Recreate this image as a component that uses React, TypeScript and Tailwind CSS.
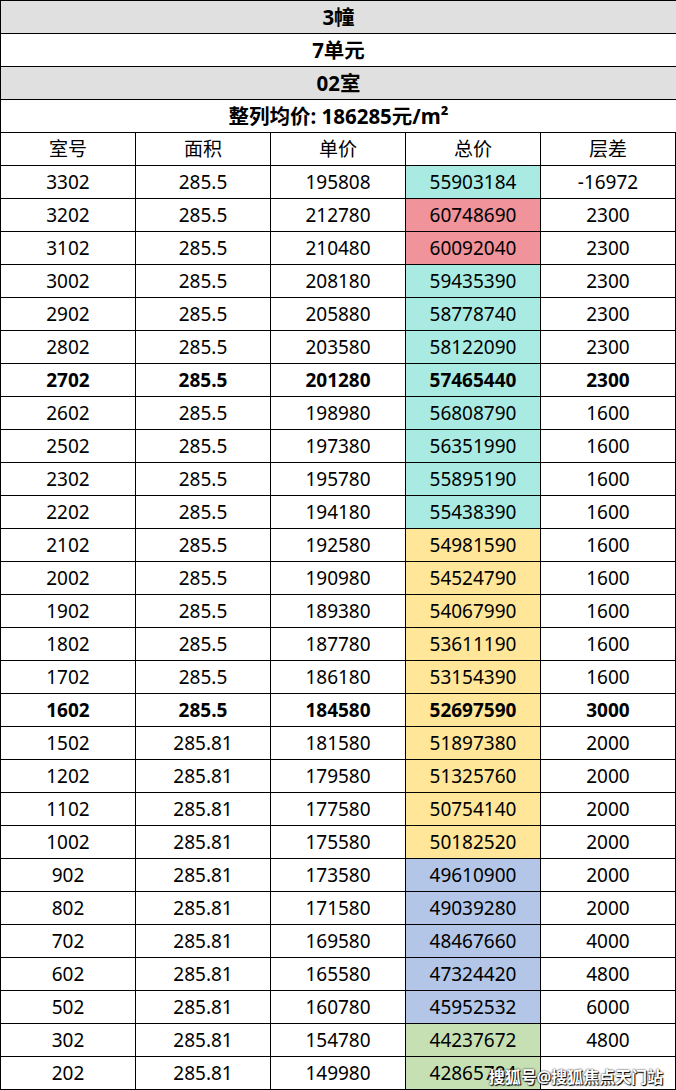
const rows: [string, string, string, string, string, string, boolean?][] = [
  ["3302", "285.5", "195808", "55903184", "-16972", "bg-[#a9ebe3]"],
  ["3202", "285.5", "212780", "60748690", "2300", "bg-[#f0939a]"],
  ["3102", "285.5", "210480", "60092040", "2300", "bg-[#f0939a]"],
  ["3002", "285.5", "208180", "59435390", "2300", "bg-[#a9ebe3]"],
  ["2902", "285.5", "205880", "58778740", "2300", "bg-[#a9ebe3]"],
  ["2802", "285.5", "203580", "58122090", "2300", "bg-[#a9ebe3]"],
  ["2702", "285.5", "201280", "57465440", "2300", "bg-[#a9ebe3]", true],
  ["2602", "285.5", "198980", "56808790", "1600", "bg-[#a9ebe3]"],
  ["2502", "285.5", "197380", "56351990", "1600", "bg-[#a9ebe3]"],
  ["2302", "285.5", "195780", "55895190", "1600", "bg-[#a9ebe3]"],
  ["2202", "285.5", "194180", "55438390", "1600", "bg-[#a9ebe3]"],
  ["2102", "285.5", "192580", "54981590", "1600", "bg-[#ffe699]"],
  ["2002", "285.5", "190980", "54524790", "1600", "bg-[#ffe699]"],
  ["1902", "285.5", "189380", "54067990", "1600", "bg-[#ffe699]"],
  ["1802", "285.5", "187780", "53611190", "1600", "bg-[#ffe699]"],
  ["1702", "285.5", "186180", "53154390", "1600", "bg-[#ffe699]"],
  ["1602", "285.5", "184580", "52697590", "3000", "bg-[#ffe699]", true],
  ["1502", "285.81", "181580", "51897380", "2000", "bg-[#ffe699]"],
  ["1202", "285.81", "179580", "51325760", "2000", "bg-[#ffe699]"],
  ["1102", "285.81", "177580", "50754140", "2000", "bg-[#ffe699]"],
  ["1002", "285.81", "175580", "50182520", "2000", "bg-[#ffe699]"],
  ["902", "285.81", "173580", "49610900", "2000", "bg-[#b4c6e7]"],
  ["802", "285.81", "171580", "49039280", "2000", "bg-[#b4c6e7]"],
  ["702", "285.81", "169580", "48467660", "4000", "bg-[#b4c6e7]"],
  ["602", "285.81", "165580", "47324420", "4800", "bg-[#b4c6e7]"],
  ["502", "285.81", "160780", "45952532", "6000", "bg-[#b4c6e7]"],
  ["302", "285.81", "154780", "44237672", "4800", "bg-[#c6e0b4]"],
  ["202", "285.81", "149980", "42865784", "", "bg-[#c6e0b4]"],
];

const cell = "w-[135px] h-full flex items-center justify-center border-r border-black";

function Banner({ text, grey }: { text: string; grey?: boolean }) {
  return (
    <div
      className={`h-[33px] flex items-center justify-center border-b border-black font-bold text-[20.5px] ${grey ? "bg-[#e0e0e0]" : "bg-white"}`}
    >
      {text}
    </div>
  );
}

export default function App() {
  return (
    <div
      className="relative w-[676px] bg-white text-black text-[19px] leading-none"
      style={{ fontFamily: '"Noto Sans", "Noto Sans CJK SC", sans-serif' }}
    >
      <div className="border-l border-t border-black">
        <Banner text="3幢" grey />
        <Banner text="7单元" />
        <Banner text="02室" grey />
        <Banner text="整列均价: 186285元/m²" />
        <div className="h-[33px] flex border-b border-black">
          {["室号", "面积", "单价", "总价", "层差"].map((h) => (
            <div key={h} className={cell}>{h}</div>
          ))}
        </div>
        {rows.map(([no, area, unit, total, diff, bg, bold]) => (
          <div key={no} className={`h-[33px] flex border-b border-black ${bold ? "font-bold" : ""}`}>
            <div className={cell}>{no}</div>
            <div className={cell}>{area}</div>
            <div className={cell}>{unit}</div>
            <div className={`${cell} ${bg}`}>{total}</div>
            <div className={cell}>{diff}</div>
          </div>
        ))}
      </div>
      <div
        className="absolute right-[13px] bottom-[5px] text-[16px] font-bold text-white"
        style={{ textShadow: "0 0 2px #000, 1px 1px 1px #000" }}
      >
        搜狐号@搜狐焦点天门站
      </div>
    </div>
  );
}
